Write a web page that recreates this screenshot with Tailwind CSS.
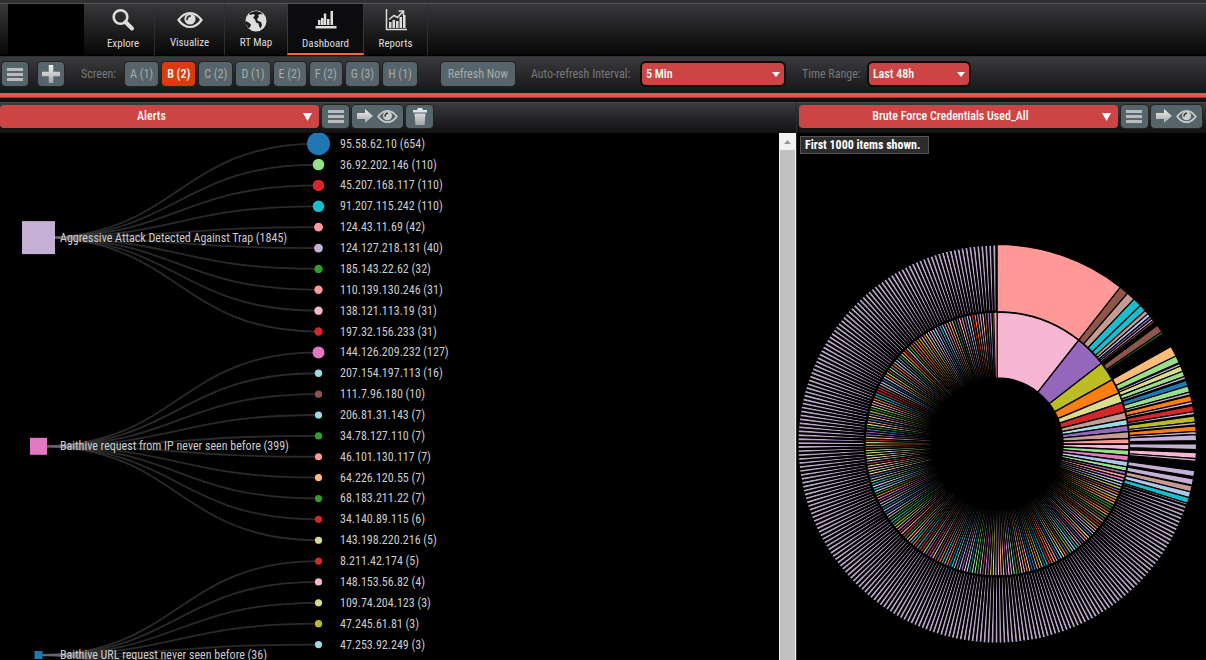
<!DOCTYPE html>
<html lang="en">
<head>
    <meta charset="UTF-8">
    <meta name="viewport" content="width=device-width, initial-scale=1.0">
    <title>Dashboard</title>
    <script src="https://cdn.jsdelivr.net/npm/@tailwindcss/browser@4"></script>
</head>
<body class="bg-black h-screen overflow-hidden flex flex-col text-[12px] text-[#ccc] font-['Roboto_Condensed','Liberation_Sans_Narrow',Roboto,sans-serif]">
    <!-- shared icons -->
    <svg class="absolute w-0 h-0">
        <defs>
            <linearGradient id="silver" x1="0" y1="0" x2="0" y2="1">
                <stop offset="0" stop-color="#f0f0f0" />
                <stop offset="1" stop-color="#a5a5a5" />
            </linearGradient>
        </defs>
        <symbol id="eye" viewBox="0 0 26 18">
            <path fill="none" stroke="currentColor" stroke-width="2.2" d="M1.500 9Q6.500 2 13 2T24.500 9Q19.500 16 13 16T1.500 9Z" />
            <circle cx="13" cy="8" r="5.600" fill="currentColor" />
            <path d="M10 8.500A3.200 3.200 0 0 1 13 5" fill="none" stroke="#333" stroke-width="1.800" stroke-linecap="round" />
        </symbol>
        <symbol id="arrow" viewBox="0 0 16 14">
            <path fill="url(#silver)" d="M0 4H8V0L16 7L8 14V10H0Z" />
        </symbol>
        <symbol id="bars" viewBox="0 0 16 13">
            <path fill="currentColor" d="M0 0H16V3H0ZM0 5H16V8H0ZM0 10H16V13H0Z" />
        </symbol>
    </svg>

    <header class="h-[56px] shrink-0 bg-gradient-to-b from-[#3c3c3f] to-[#080808] border-b border-black">
        <div class="h-1 bg-[#303032] border-b border-[#555]"></div>
        <nav class="flex pl-2 h-[51px] text-[11px] text-[#ddd]">
            <div class="w-[76px] bg-black"></div>
            <a href="#" class="w-[71px] flex flex-col items-center justify-between pt-1 pl-2 border-r border-[#2e2e30]">
                <svg class="w-6 h-6" viewBox="0 0 24 24"><circle cx="9.500" cy="9" r="6.800" fill="none" stroke="#ddd" stroke-width="2.600" /><path d="M14.500 14L21 20.500" stroke="#ddd" stroke-width="4" stroke-linecap="round" /></svg>
                <span class="leading-4 pb-[3px]">Explore</span>
            </a>
            <a href="#" class="w-[70px] flex flex-col items-center justify-between pt-[7px] pb-1 border-r border-[#2e2e30]">
                <svg class="w-[26px] h-[18px]"><use href="#eye" /></svg>
                <span class="leading-4">Visualize</span>
            </a>
            <a href="#" class="w-[62px] flex flex-col items-center justify-between pt-1.5 pb-1">
                <svg class="w-[22px] h-[22px]" viewBox="0 0 22 22">
                    <circle cx="11" cy="11" r="10.500" fill="#ddd" />
                    <path fill="#1b1b1d" d="M7 2L11 1L16 2.500L18 4.500L15 4L13 5.500L14 7L12 9L13 11L16 12L17 15L15.500 18.500L14 16L13.500 13.500L11 12.500L10 9.500L8 7.500L10 5.500L8.500 4L5 5L4 3.500ZM0.500 11L3 12L6 14.500L5 17.500L3.500 18L1 14Z" />
                </svg>
                <span class="leading-4">RT Map</span>
            </a>
            <a href="#" class="w-[77px] flex flex-col items-center justify-between pt-1.5 bg-[#0c0c0e] border-x border-[#39393b] border-b-2 border-b-[#ee6a3c]">
                <svg class="w-[22px] h-[20px]" viewBox="0 0 22 20" fill="#ddd"><path d="M0.500 16H21.500V18.500H0.500ZM3 10H5.500V15H3ZM6 8H8.500V15H6ZM8.800 3.500H11.300V15H8.800ZM12 9H14.500V15H12ZM15.500 1H18V15H15.500Z" /></svg>
                <span class="leading-4 pb-px">Dashboard</span>
            </a>
            <a href="#" class="w-[64px] flex flex-col items-center justify-between pt-1 border-r border-[#2e2e30]">
                <svg class="w-[22px] h-6" viewBox="0 0 22 24"><path d="M1.500 1V21.500H22" fill="none" stroke="#ddd" stroke-width="1.500" /><path fill="#ddd" d="M4 14H6.500V20H4ZM7.500 12H10V20H7.500ZM11 13H13.500V20H11ZM14.500 9H17V20H14.500ZM18 7H20.500V20H18Z" /><path d="M4 11.500L9 7.500L12.500 9.500L18 3.500M13.500 3H18.500V7.500" fill="none" stroke="#ddd" stroke-width="1.500" /></svg>
                <span class="leading-4 pb-[3px]">Reports</span>
            </a>
        </nav>
    </header>

    <div class="h-[37px] shrink-0 flex items-center pl-0.5 pb-0.5 text-[12px] text-[#777] bg-gradient-to-b from-[#3b3b3e] to-[#161618] border-t border-[#303032]">
        <button aria-label="Menu" class="w-[26px] h-6 rounded-sm bg-[#56656b] text-[#bbb] flex items-center justify-center shadow-[0_0_0_1px_#222]"><svg class="w-4 h-[13px]"><use href="#bars" /></svg></button>
        <button aria-label="Add" class="ml-[10px] w-[26px] h-6 rounded-sm bg-[#56656b] flex items-center justify-center shadow-[0_0_0_1px_#222]"><svg class="w-[18px] h-[18px]" viewBox="0 0 16 16"><path fill="url(#silver)" d="M6 0H10V6H16V10H10V16H6V10H0V6H6Z" /></svg></button>
        <span class="w-11 ml-[17px]">Screen:</span>
        <div id="screens" class="flex gap-1"></div>
        <button class="ml-6 w-[74px] h-6 rounded-sm bg-[#56656b] text-[#aaa] shadow-[0_0_0_1px_#222]">Refresh Now</button>
        <label for="interval" class="ml-4 w-[106px] whitespace-nowrap">Auto-refresh Interval:</label>
        <div class="relative ml-[3px] w-[146px]">
            <select id="interval" class="appearance-none block w-full h-[26px] rounded-md bg-[#cc4444] text-white font-medium pl-1 border-2 border-[#0c0c0c]"><option>5 Min</option><option>10 Min</option></select>
            <svg class="absolute right-1.5 top-[11px] w-2 h-[5px] pointer-events-none" viewBox="0 0 8 5"><path d="M0 0H8L4 5Z" fill="#fff" /></svg>
        </div>
        <label for="range" class="ml-4 w-[62px] whitespace-nowrap">Time Range:</label>
        <div class="relative ml-[3px] w-[104px]">
            <select id="range" class="appearance-none block w-full h-[26px] rounded-md bg-[#cc4444] text-white font-medium pl-1 border-2 border-[#0c0c0c]"><option>Last 48h</option><option>Last 24h</option></select>
            <svg class="absolute right-1.5 top-[11px] w-2 h-[5px] pointer-events-none" viewBox="0 0 8 5"><path d="M0 0H8L4 5Z" fill="#fff" /></svg>
        </div>
    </div>
    <div class="h-[5px] shrink-0 bg-[#e55353] border-b border-[#9c3434]"></div>
    <div class="h-1 shrink-0 bg-[#111]"></div>

    <main class="flex flex-1 min-h-0">
        <section class="w-[66%] flex flex-col min-h-0">
            <div class="h-[31px] shrink-0 flex items-center gap-[3px] pb-1 bg-gradient-to-b from-[#3b3b3e] to-[#111113] border-t border-[#444]">
                <div class="relative w-[319px]">
                    <select aria-label="Left panel" class="appearance-none block w-full h-[23px] rounded-sm bg-[#cc4444] text-white font-medium text-center pr-4"><option>Alerts</option></select>
                    <svg class="absolute right-[7px] top-2 w-[9px] h-2 pointer-events-none" viewBox="0 0 9 8"><path d="M0 0H9L4.500 8Z" fill="#fff" /></svg>
                </div>
                <button aria-label="Panel menu" class="w-[27px] h-[23px] rounded-sm bg-[#56656b] text-[#bbb] flex items-center justify-center shadow-[0_0_0_1px_#222]"><svg class="w-4 h-[13px]"><use href="#bars" /></svg></button>
                <button aria-label="Visualize panel" class="w-[51px] h-[23px] rounded-sm bg-[#56656b] text-[#ccc] flex items-center justify-center gap-1 shadow-[0_0_0_1px_#222]"><svg class="w-4 h-[14px]"><use href="#arrow" /></svg><svg class="w-[21px] h-[15px]"><use href="#eye" /></svg></button>
                <button aria-label="Delete panel" class="w-[27px] h-[23px] rounded-sm bg-[#56656b] flex items-center justify-center shadow-[0_0_0_1px_#222]"><svg class="w-4 h-[17px]" viewBox="0 0 16 17"><path fill="url(#silver)" d="M1 2H5L6 0H10L11 2H15V4.500H1ZM2.500 5.500H13.500L12.500 17H3.500Z" /></svg></button>
            </div>
            <div class="flex flex-1 min-h-0">
                <div class="flex-1 overflow-hidden">
                    <svg id="tree" width="600" height="640"></svg>
                </div>
                <div class="w-[17px] bg-[#f1f1f1] flex flex-col items-center">
                    <svg class="w-[17px] h-[17px]" viewBox="0 0 17 17"><path d="M5 11H12L8.500 7Z" fill="#999" /></svg>
                    <div class="w-[15px] flex-1 bg-[#c1c1c1]"></div>
                </div>
            </div>
        </section>
        <section class="flex-1 min-w-0 flex flex-col border-l border-[#2a2a2c]">
            <div class="h-[31px] shrink-0 flex items-center gap-[3px] pb-1 pl-0.5 bg-gradient-to-b from-[#3b3b3e] to-[#111113] border-t border-[#444]">
                <div class="relative w-[319px] shrink-0">
                    <select aria-label="Right panel" class="appearance-none block w-full h-[23px] rounded-sm bg-[#cc4444] text-white font-medium text-center pr-4"><option>Brute Force Credentials Used_All</option></select>
                    <svg class="absolute right-[7px] top-2 w-[9px] h-2 pointer-events-none" viewBox="0 0 9 8"><path d="M0 0H9L4.500 8Z" fill="#fff" /></svg>
                </div>
                <button aria-label="Panel menu" class="w-[27px] h-[23px] rounded-sm bg-[#56656b] text-[#bbb] flex items-center justify-center shadow-[0_0_0_1px_#222]"><svg class="w-4 h-[13px]"><use href="#bars" /></svg></button>
                <button aria-label="Visualize panel" class="w-[51px] h-[23px] rounded-sm bg-[#56656b] text-[#ccc] flex items-center justify-center gap-1 shadow-[0_0_0_1px_#222]"><svg class="w-4 h-[14px]"><use href="#arrow" /></svg><svg class="w-[21px] h-[15px]"><use href="#eye" /></svg></button>
            </div>
            <div class="flex-1 min-h-0 flex flex-col items-start pt-[3px] pl-[3px] overflow-hidden">
                <div class="h-[18px] leading-4 pl-1 pr-2 border border-[#555] bg-[#2c2c2c] text-white font-bold whitespace-nowrap">First 1000 items shown.</div>
                <svg id="sunburst" class="mt-[90px] ml-[-3px] w-full aspect-square" viewBox="-200 -200 406 406"></svg>
            </div>
        </section>
    </main>

    <script>
        const svgNS = 'http://www.w3.org/2000/svg';

        function add(parent, tag, attrs, text) {
            const el = document.createElementNS(svgNS, tag);
            for (const key in attrs) el.setAttribute(key, attrs[key]);
            if (text) el.textContent = text;
            parent.appendChild(el);
        }

        // Screen buttons
        const screens = ['A (1)', 'B (2)', 'C (2)', 'D (1)', 'E (2)', 'F (2)', 'G (3)', 'H (1)'];
        document.getElementById('screens').innerHTML = screens.map((name, i) =>
            i === 1
                ? `<button class="px-[5px] h-6 rounded-sm bg-[#dd3a12] text-white font-medium shadow-[0_0_0_1px_#222]">${name}</button>`
                : `<button class="px-[5px] h-6 rounded-sm bg-[#56656b] text-[#aaa] shadow-[0_0_0_1px_#222]">${name}</button>`
        ).join('');

        // Alerts tree
        const groups = [
            { label: 'Aggressive Attack Detected Against Trap (1845)', size: 33, color: '#c5b0d5', items: [
                ['95.58.62.10 (654)', '#1f77b4', 11.5], ['36.92.202.146 (110)', '#98df8a', 5.8], ['45.207.168.117 (110)', '#d62728', 5.8],
                ['91.207.115.242 (110)', '#17becf', 5.8], ['124.43.11.69 (42)', '#ff9896', 4.4], ['124.127.218.131 (40)', '#c5b0d5', 4.4],
                ['185.143.22.62 (32)', '#2ca02c', 4.2], ['110.139.130.246 (31)', '#ff9896', 4.2], ['138.121.113.19 (31)', '#f7b6d2', 4.2],
                ['197.32.156.233 (31)', '#d62728', 4.2]] },
            { label: 'Baithive request from IP never seen before (399)', size: 17, color: '#e377c2', items: [
                ['144.126.209.232 (127)', '#e377c2', 6], ['207.154.197.113 (16)', '#9edae5', 3.7], ['111.7.96.180 (10)', '#8c564b', 3.6],
                ['206.81.31.143 (7)', '#9edae5', 3.6], ['34.78.127.110 (7)', '#2ca02c', 3.6], ['46.101.130.117 (7)', '#ff9896', 3.6],
                ['64.226.120.55 (7)', '#ffbb78', 3.6], ['68.183.211.22 (7)', '#2ca02c', 3.6], ['34.140.89.115 (6)', '#d62728', 3.6],
                ['143.198.220.216 (5)', '#dbdb8d', 3.6]] },
            { label: 'Baithive URL request never seen before (36)', size: 8, color: '#1f77b4', items: [
                ['8.211.42.174 (5)', '#d62728', 3.6], ['148.153.56.82 (4)', '#f7b6d2', 3.6], ['109.74.204.123 (3)', '#dbdb8d', 3.6],
                ['47.245.61.81 (3)', '#bcbd22', 3.6], ['47.253.92.249 (3)', '#9edae5', 3.6], ['', '#2ca02c', 3.6], ['', '#d62728', 3.6],
                ['', '#2ca02c', 3.6], ['', '#d62728', 3.6], ['', '#ffbb78', 3.6]] }
        ];
        const tree = document.getElementById('tree');
        const rowY = (n) => 10.7 + n * 20.87;
        groups.forEach((g, gi) => {
            const y = rowY(gi * 10 + 4.5);
            g.items.forEach((item, i) => {
                add(tree, 'path', { d: `M38.500 ${y}C178 ${y} 178 ${rowY(gi * 10 + i)} 318.500 ${rowY(gi * 10 + i)}`, fill: 'none', stroke: '#68686e', 'stroke-opacity': 0.4, 'stroke-width': 1.8 });
            });
            add(tree, 'rect', { x: 38.5 - g.size / 2, y: y - g.size / 2, width: g.size, height: g.size, fill: g.color });
            add(tree, 'text', { x: 60, y: y + 4, fill: '#ccc' }, g.label);
            g.items.forEach(([label, color, r], i) => {
                const cy = rowY(gi * 10 + i);
                add(tree, 'circle', { cx: 318.5, cy, r, fill: color });
                add(tree, 'text', { x: 340, y: cy + 4, fill: '#ccc' }, label);
            });
        });

        // Credentials sunburst, angles in degrees clockwise from the top
        const sunburst = document.getElementById('sunburst');
        function arc(r0, r1, a0, a1, fill, stroke) {
            const p = (r, a) => {
                const t = a * Math.PI / 180;
                return `${(r * Math.sin(t)).toFixed(2)} ${(-r * Math.cos(t)).toFixed(2)}`;
            };
            add(sunburst, 'path', {
                d: `M${p(r0, a0)}L${p(r1, a0)}A${r1} ${r1} 0 0 1 ${p(r1, a1)}L${p(r0, a1)}A${r0} ${r0} 0 0 0 ${p(r0, a0)}Z`,
                fill, stroke: '#000', 'stroke-width': stroke
            });
        }

        const users = [
            [38.2, '#f7b6d2'], [52.3, '#9467bd'], [60.8, '#bcbd22'], [67.3, '#ff7f0e'], [71.6, '#dbdb8d'], [76, '#d62728'],
            [79.2, '#c49c94'], [81.8, '#9edae5'], [84.6, '#9467bd'], [87.6, '#c49c94'], [90.1, '#ff9896'], [92.6, '#f7b6d2'],
            [95, '#98df8a'], [97.5, '#e377c2'], [100, '#aec7e8'], [102, '#98df8a'], [103.5, '#9467bd'], [105, '#ff9896'],
            [106.4, '#e377c2'], [107.8, '#aec7e8'], [109.1, '#aec7e8'], [110.4, '#bcbd22'], [111.6, '#9467bd'], [112.8, '#ff7f0e'],
            [114, '#c5b0d5'], [115.2, '#bcbd22'], [116.4, '#ff7f0e'], [117.6, '#ff9896']
        ];
        let from = 0;
        users.forEach(([to, color]) => {
            arc(66, 132, from, to, color, 1.3);
            from = to;
        });

        const palette = ['#1f77b4', '#aec7e8', '#ff7f0e', '#ffbb78', '#2ca02c', '#98df8a', '#d62728', '#ff9896', '#9467bd', '#c5b0d5',
            '#8c564b', '#c49c94', '#e377c2', '#f7b6d2', '#bcbd22', '#dbdb8d', '#17becf', '#9edae5', '#ff7f0e', '#1f77b4'];
        let seed = 11;
        const step = 1.155;
        for (let a = from; a < 358.4; a += step) {
            seed = (seed * 73 + 41) % 1009;
            arc(66, 132, a, a + step, palette[seed % 20], 1.3);
        }
        arc(66, 132, 358.6, 360, '#ff9896', 1);

        const passwords = [
            [0, 38.2, '#ff9896'], [38.2, 40.9, '#8c564b'], [40.9, 43.4, '#c49c94'], [43.4, 46, '#17becf'], [46, 48, '#17becf'],
            [48, 49.2, '#c49c94'], [49.2, 50.2, '#aec7e8'], [50.2, 51, '#9467bd'], [51, 51.7, '#f7b6d2'], [51.7, 52.3, '#8c564b'],
            [53.5, 55.8, '#8c564b'], [55.8, 56.4, '#2ca02c'], [60.7, 63.8, '#ffbb78'], [63.8, 65.9, '#98df8a'], [66.2, 67, '#c5b0d5'],
            [67, 68.6, '#dbdb8d'], [68.6, 70.2, '#98df8a'], [70.2, 71, '#c5b0d5'], [71.4, 73.1, '#1f77b4'], [73.1, 74.9, '#98df8a'],
            [74.9, 75.7, '#c5b0d5'], [76, 77.7, '#ff7f0e'], [77.7, 78.5, '#c5b0d5'], [78.9, 80.7, '#d62728'], [80.7, 81.5, '#c5b0d5'],
            [81.9, 83.7, '#bcbd22'], [83.7, 84.5, '#c5b0d5'], [84.8, 86.4, '#ff7f0e'], [86.4, 87.2, '#c5b0d5'], [87.3, 89, '#c5b0d5'],
            [89.9, 91.6, '#c5b0d5'], [92.5, 94.2, '#f7b6d2'], [94.2, 95, '#c5b0d5'], [97.7, 99.4, '#c5b0d5'], [100.1, 101.9, '#c5b0d5'],
            [102.1, 103.9, '#c49c94'], [103.9, 105.6, '#aec7e8'], [105.6, 107.3, '#17becf'], [107.3, 108, '#c5b0d5']
        ];
        passwords.forEach(([a0, a1, color]) => arc(132.5, 199.5, a0, a1, color, 1.2));
        for (let a = 108; a < 359.5; a += step) {
            arc(132.5, 199.5, a, a + step, '#b9a6ca', 2.1);
        }
    </script>
</body>
</html>
